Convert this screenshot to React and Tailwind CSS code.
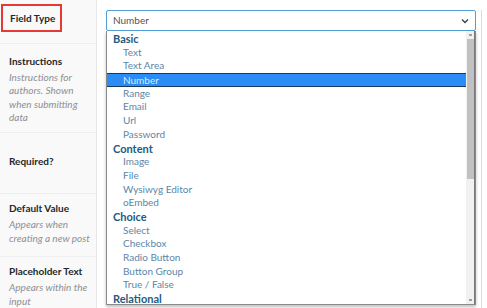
import React from "react";

const groups = [
  { label: "Basic", items: ["Text", "Text Area", "Number", "Range", "Email", "Url", "Password"] },
  { label: "Content", items: ["Image", "File", "Wysiwyg Editor", "oEmbed"] },
  { label: "Choice", items: ["Select", "Checkbox", "Radio Button", "Button Group", "True / False"] },
  { label: "Relational", items: [] },
];

function LeftRow({ title, desc, className = "", boxed }) {
  return (
    <div className={"border-b border-[#eeeeee] px-[9px] whitespace-nowrap " + className}>
      {boxed ? (
        <div className="-ml-[8px] mt-[4px] w-[61px] h-[28px] border-2 border-[#e53935] flex items-center pl-[7px] text-[10px] font-bold text-[#23282d]">
          {title}
        </div>
      ) : (
        <div className="text-[10px] font-bold text-[#23282d] leading-[14px]">{title}</div>
      )}
      {desc && (
        <div className="mt-[3px] text-[10px] italic text-[#8c8f94] leading-[13.5px]">
          {desc.map((l, i) => (
            <div key={i}>{l}</div>
          ))}
        </div>
      )}
    </div>
  );
}

export default function App() {
  return (
    <div
      className="w-[487px] h-[308px] overflow-hidden bg-white flex"
      style={{ fontFamily: 'Lato, "Noto Sans", sans-serif' }}
    >
      <div className="w-[97px] shrink-0 bg-[#f9f9f9] border-r border-[#e8e8e8] flex flex-col">
        <LeftRow title="Field Type" boxed className="h-[44px]" />
        <LeftRow
          title="Instructions"
          desc={["Instructions for", "authors. Shown", "when submitting", "data"]}
          className="h-[90px] pt-[10px]"
        />
        <LeftRow title="Required?" className="h-[61px] pt-[21px]" />
        <LeftRow
          title="Default Value"
          desc={["Appears when", "creating a new post"]}
          className="h-[63px] pt-[7px]"
        />
        <LeftRow
          title="Placeholder Text"
          desc={["Appears within the", "input"]}
          className="flex-1 pt-[7px] border-b-0"
        />
      </div>

      <div className="flex-1 pl-[9px] pt-[10px] flex">
        <div className="w-[370px] shrink-0 relative">
          <div className="h-[21px] border border-[#4f9fd6] rounded-[2px] flex items-center justify-between pl-[6px] pr-[5px] text-[10px] text-[#50575e]">
            <span>Number</span>
            <svg width="10" height="10" viewBox="0 0 10 10" className="text-[#3c434a]">
              <path d="M2 3.5 L5 6.5 L8 3.5" fill="none" stroke="currentColor" strokeWidth="1.4" />
            </svg>
          </div>
          <div className="absolute left-0 top-[21px] w-[370px] h-[274px] bg-white border border-[#8a8a8a] border-t-0 shadow-[0_2px_3px_rgba(0,0,0,0.25)] flex">
            <div className="flex-1 pt-[1px]">
              {groups.map((g) => (
                <div key={g.label}>
                  <div className="h-[13.7px] leading-[13.7px] pl-[6px] text-[11px] font-bold text-[#1d5b80]">
                    {g.label}
                  </div>
                  {g.items.map((it) =>
                    it === "Number" ? (
                      <div
                        key={it}
                        className="h-[13.7px] leading-[12px] pl-[16px] text-[10px] bg-[#2b8cf5] border-y border-[#1a3a5c] text-[#dceaf8]"
                      >
                        {it}
                      </div>
                    ) : (
                      <div key={it} className="h-[13.7px] leading-[13.7px] pl-[16px] text-[10px] text-[#5b86a8]">
                        {it}
                      </div>
                    )
                  )}
                </div>
              ))}
            </div>
            <div className="w-[9px] bg-[#f1f1f1] border-r border-[#7a7a7a] flex flex-col items-center">
              <div className="h-[8px] flex items-center">
                <div className="w-[3px] h-[2px] bg-[#a0a0a0]" />
              </div>
              <div className="w-[7px] h-[140px] bg-[#c1c1c1]" />
              <div className="flex-1" />
              <div className="h-[8px] flex items-center">
                <div className="w-[3px] h-[2px] bg-[#a0a0a0]" />
              </div>
            </div>
          </div>
        </div>
        <div className="ml-[5px] w-[1px] bg-[#dcdcdc]" />
      </div>
    </div>
  );
}
